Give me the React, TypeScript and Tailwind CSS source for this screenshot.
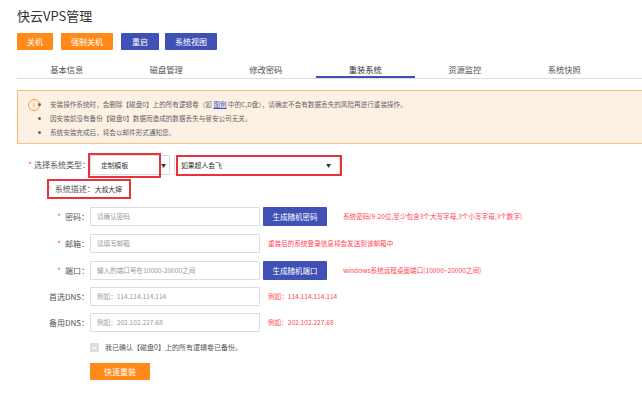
import React from "react";

const tabs = ["基本信息", "磁盘管理", "修改密码", "重装系统", "资源监控", "系统快照"];

interface RowProps {
  label: string;
  required?: boolean;
  placeholder: string;
  button?: string;
  hint?: string;
  className?: string;
}

function Row({ label, required, placeholder, button, hint, className }: RowProps) {
  return (
    <div className={"flex items-center h-[19px] " + (className || "")}>
      <div className="w-[73px] text-right text-[8px] text-[#555] pr-[1px]">
        {required && <span className="text-[#f55] mr-[4px]">*</span>}
        {label}：
      </div>
      <div className="w-[170px] h-[19px] border border-[#ddd] rounded-[1px] flex items-center pl-[6px] text-[6.6px] text-[#999]">
        {placeholder}
      </div>
      {button ? (
        <>
          <div className="ml-[3px] w-[64px] h-[19px] bg-[#3f51b5] text-white text-[7.5px] flex items-center justify-center rounded-[1px]">
            {button}
          </div>
          <div className="ml-[16px] text-[6.6px] text-[#ff4455]">{hint}</div>
        </>
      ) : (
        <div className="ml-[8px] text-[6.6px] text-[#ff4455]">{hint}</div>
      )}
    </div>
  );
}

export default function App() {
  return (
    <div className="w-[642px] h-[397px] overflow-hidden bg-white font-['Noto_Sans_CJK_SC','Noto_Sans',sans-serif]">
      <div className="pl-[17px] pt-[6px]">
        <h1 className="text-[13px] leading-[19px] text-[#333]">快云VPS管理</h1>

        <div className="flex mt-[8px] h-[17px] text-[8px] text-white">
          <div className="w-[36px] bg-[#ff8a1a] flex items-center justify-center rounded-[1px]">关机</div>
          <div className="ml-[8px] w-[52px] bg-[#ff8a1a] flex items-center justify-center rounded-[1px]">强制关机</div>
          <div className="ml-[8px] w-[38px] bg-[#3f51b5] flex items-center justify-center rounded-[1px]">重启</div>
          <div className="ml-[6px] w-[52px] bg-[#3f51b5] flex items-center justify-center rounded-[1px]">系统视图</div>
        </div>

        <div className="flex mt-[12px] h-[17px] border-b border-[#ddd] text-[8.3px] text-[#555]">
          {tabs.map((t, i) => (
            <div
              key={t}
              className={
                "w-[99.5px] text-center leading-[15px] " +
                (i === 3 ? "border-b-2 border-[#3f51b5] text-[#333]" : "")
              }
            >
              {t}
            </div>
          ))}
        </div>

        <div className="mt-[11px] h-[54px] border-l border-y border-[#ffbd7f] bg-[#fdf1e4] flex pt-[6px] pl-[10px]">
          <div className="w-[12px] h-[12px] rounded-full border border-[#ff9a3a] text-[#ff9a3a] text-[8px] leading-[10px] text-center mt-[2px]">
            i
          </div>
          <ul className="ml-[10px] text-[6.6px] leading-[14px] text-[#666] list-disc">
            <li>
              安装操作系统时，会删除【磁盘0】上的所有逻辑卷（如 <span className="text-[#3f51b5] underline">图例</span> 中的C,D盘），请确定不会有数据丢失的风险再进行重装操作。
            </li>
            <li>因安装前没有备份【磁盘0】数据而造成的数据丢失与曼安公司无关。</li>
            <li>系统安装完成后，将会以邮件形式通知您。</li>
          </ul>
        </div>
      </div>

      <div className="pl-[17px]">
        <div className="relative flex items-center mt-[11px] h-[20px]">
          <div className="w-[73px] text-right text-[8px] text-[#555]">
            <span className="text-[#f55] mr-[2px]">*</span>选择系统类型：
          </div>
          <div className="w-[80px] h-[20px] border border-[#ddd] flex items-center justify-between pl-[10px] pr-[3px] text-[6.8px] text-[#333]">
            <span>定制模板</span>
            <span className="text-[5px]">▼</span>
          </div>
          <div className="ml-[4px] w-[166px] h-[20px] border border-[#ddd] flex items-center justify-between pl-[6px] pr-[8px] text-[6.8px] text-[#333]">
            <span>如果超人会飞</span>
            <span className="text-[5px]">▼</span>
          </div>
          <div className="absolute left-[71px] top-[-2px] w-[73px] h-[25px] border-2 border-[#e8323c]"></div>
          <div className="absolute left-[159px] top-[0px] w-[166px] h-[21px] border-2 border-[#e8323c]"></div>
        </div>

        <div className="relative flex items-center mt-[4px] h-[20px] text-[8px]">
          <span className="ml-[30px] text-[#f99] mr-[4px]">*</span>
          <span className="text-[#555]">系统描述：</span>
          <span className="text-[#333] text-[6.8px]">大叔大婶</span>
          <div className="absolute left-[30px] top-0 w-[84px] h-[20px] border-2 border-[#e8323c]"></div>
        </div>

        <Row className="mt-[8px]" required label="密码" placeholder="请确认密码" button="生成随机密码" hint="系统密码(9-20位,至少包含3个大写字母,3个小写字母,3个数字)" />
        <Row className="mt-[8px]" required label="邮箱" placeholder="请填写邮箱" hint="重装后的系统登录信息将会发送到该邮箱中" />
        <Row className="mt-[8px]" required label="端口" placeholder="输入的端口号在10000-20000之间" button="生成随机端口" hint="windows系统远程桌面端口(10000~20000之间)" />
        <Row className="mt-[7px]" label="首选DNS" placeholder="例如：114.114.114.114" hint="例如：114.114.114.114" />
        <Row className="mt-[7px]" label="备用DNS" placeholder="例如：202.102.227.68" hint="例如：202.102.227.68" />

        <div className="flex items-center mt-[11px] ml-[73px] h-[9px]">
          <div className="w-[9px] h-[9px] bg-[#ddd] rounded-[1px] flex items-center justify-center">
            <svg width="7" height="7" viewBox="0 0 10 10">
              <path d="M2 5 L4.2 7.2 L8.2 2.8" stroke="#fff" strokeWidth="1.6" fill="none" />
            </svg>
          </div>
          <span className="ml-[6px] text-[7px] text-[#555]">我已确认【磁盘0】上的所有逻辑卷已备份。</span>
        </div>

        <div className="mt-[11px] ml-[73px] w-[60px] h-[17px] bg-[#ff8a1a] text-white text-[8px] flex items-center justify-center rounded-[1px]">
          快速重装
        </div>
      </div>
    </div>
  );
}
